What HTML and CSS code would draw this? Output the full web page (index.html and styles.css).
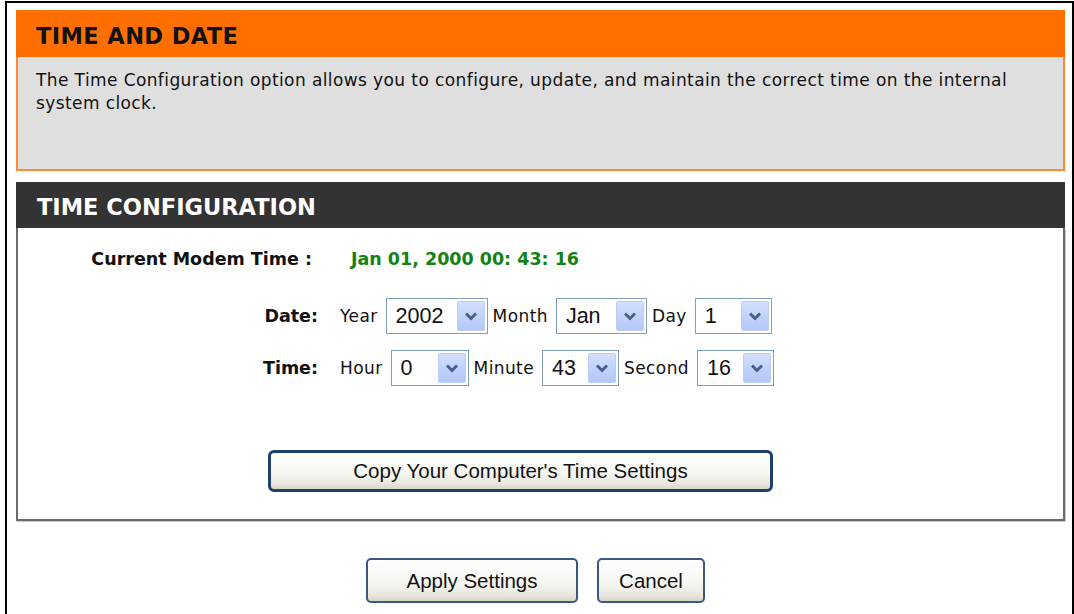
FILE: index.html
```html
<!DOCTYPE html>
<html lang="en">
<head>
<meta charset="utf-8">
<title>Time and Date</title>
<link rel="stylesheet" href="styles.css">
</head>
<body>
<div class="frame">
  <section class="panel panel-orange">
    <h2 class="panel-title">TIME AND DATE</h2>
    <div class="panel-body">
      <p class="intro">The Time Configuration option allows you to configure, update, and maintain the correct time on the internal system clock.</p>
    </div>
  </section>

  <section class="panel panel-dark">
    <h2 class="panel-title">TIME CONFIGURATION</h2>
    <div class="panel-body">
      <div class="form">
        <div class="row row-now">
          <span class="lbl lbl-now">Current Modem Time :</span>
          <span class="now">Jan 01, 2000 00: 43: 16</span>
        </div>
        <div class="row row-date">
          <span class="lbl">Date:</span>
          <div class="fields">
            <span class="fl">Year</span>
            <div class="sel w-year"><span class="val">2002</span><span class="arrow"><svg width="12" height="9" viewBox="0 0 12 9"><path d="M1 1.5 L6 6.5 L11 1.5" fill="none" stroke="#4a5f88" stroke-width="3"/></svg></span></div>
            <span class="fl">Month</span>
            <div class="sel w-mon"><span class="val">Jan</span><span class="arrow"><svg width="12" height="9" viewBox="0 0 12 9"><path d="M1 1.5 L6 6.5 L11 1.5" fill="none" stroke="#4a5f88" stroke-width="3"/></svg></span></div>
            <span class="fl">Day</span>
            <div class="sel w-sm"><span class="val">1</span><span class="arrow"><svg width="12" height="9" viewBox="0 0 12 9"><path d="M1 1.5 L6 6.5 L11 1.5" fill="none" stroke="#4a5f88" stroke-width="3"/></svg></span></div>
          </div>
        </div>
        <div class="row row-time">
          <span class="lbl">Time:</span>
          <div class="fields">
            <span class="fl">Hour</span>
            <div class="sel w-hour"><span class="val">0</span><span class="arrow"><svg width="12" height="9" viewBox="0 0 12 9"><path d="M1 1.5 L6 6.5 L11 1.5" fill="none" stroke="#4a5f88" stroke-width="3"/></svg></span></div>
            <span class="fl">Minute</span>
            <div class="sel w-sm"><span class="val">43</span><span class="arrow"><svg width="12" height="9" viewBox="0 0 12 9"><path d="M1 1.5 L6 6.5 L11 1.5" fill="none" stroke="#4a5f88" stroke-width="3"/></svg></span></div>
            <span class="fl">Second</span>
            <div class="sel w-sm"><span class="val">16</span><span class="arrow"><svg width="12" height="9" viewBox="0 0 12 9"><path d="M1 1.5 L6 6.5 L11 1.5" fill="none" stroke="#4a5f88" stroke-width="3"/></svg></span></div>
          </div>
        </div>
      </div>
      <div class="copy-row">
        <button class="btn btn-copy" type="button">Copy Your Computer's Time Settings</button>
      </div>
    </div>
  </section>

  <div class="actions">
    <button class="btn btn-apply" type="button">Apply Settings</button>
    <button class="btn btn-cancel" type="button">Cancel</button>
  </div>
</div>
</body>
</html>
```

FILE: styles.css
```css
* { box-sizing: border-box; }

html, body {
  margin: 0;
  padding: 0;
  background: #fff;
}

body {
  font-family: "DejaVu Sans", Verdana, sans-serif;
  font-size: 17px;
  color: #000;
}

.frame {
  margin: 1px 0 0 5px;
  border: 2px solid #000;
  border-bottom: none;
  min-height: calc(100vh - 1px);
  padding: 7px 7px 0 9px;
}

.panel-title {
  margin: 0;
  font-family: "DejaVu Sans", Verdana, sans-serif;
  font-weight: bold;
  font-size: 22.5px;
}

.panel-orange .panel-title {
  background: #ff6f00;
  color: #111;
  height: 47px;
  padding: 5px 0 0 20px;
  line-height: 42px;
  letter-spacing: 0.4px;
}

.panel-orange .panel-body {
  background: #dfdfdf;
  border: 2px solid #ff8a33;
  border-top: none;
  padding: 12px 18px 0 18px;
  height: 114px;
}

.intro {
  margin: 0;
  line-height: 23px;
  font-size: 17px;
  letter-spacing: 0.4px;
  color: #111;
}

.panel-dark {
  margin-top: 11px;
}

.panel-dark .panel-title {
  background: #333;
  color: #fff;
  height: 46px;
  padding: 5px 0 0 21px;
  line-height: 40px;
}

.panel-dark .panel-body {
  background: #fff;
  border: 2px solid #6b6b6b;
  border-top: none;
  box-shadow: 1px 1px 0 #c9c9c9;
  padding: 13px 0 27px 0;
}

.form {
  display: flex;
  flex-direction: column;
}

.row {
  display: grid;
  grid-template-columns: 300px auto;
  column-gap: 22px;
  align-items: center;
  height: 36px;
}

.row-date { margin-top: 21px; }
.row-time { margin-top: 16px; }

.lbl {
  text-align: right;
  font-weight: bold;
  font-size: 17.5px;
  color: #111;
}

.lbl-now { padding-right: 6px; }

.now {
  margin-left: 11px;
  font-weight: bold;
  font-size: 17.5px;
  color: #128212;
}

.fields {
  display: flex;
  align-items: center;
  gap: 6px;
}

.fl {
  font-size: 17px;
  letter-spacing: 0.4px;
  color: #111;
}

.fl + .sel { margin-left: 2px; }
.sel + .fl { margin-left: -1px; }

.sel {
  display: flex;
  align-items: center;
  justify-content: space-between;
  height: 36px;
  border: 1px solid #7f9db9;
  background: #fff;
  padding: 0 2px 0 9px;
  font-family: "Liberation Sans", Arial, sans-serif;
  font-size: 21.5px;
  color: #111;
}

.w-year { width: 102px; }
.w-mon { width: 91px; }
.w-sm { width: 77px; }
.w-hour { width: 78px; }

.arrow {
  display: flex;
  align-items: center;
  justify-content: center;
  width: 28px;
  height: 30px;
  border: 1px solid #bccdf5;
  border-radius: 2px;
  background: linear-gradient(#d3e0fd, #bed0fa 60%, #b4c8f6);
}

.copy-row {
  display: flex;
  padding-left: 250px;
  margin-top: 64px;
}

.btn {
  font-family: "Liberation Sans", Arial, sans-serif;
  font-size: 20.5px;
  color: #111;
  background: linear-gradient(#ffffff, #f6f6f2 55%, #e9e7df 85%, #d9d5c8);
  border: 2px solid #3a5785;
  border-radius: 5px;
  padding: 0;
  cursor: pointer;
}

.btn-copy {
  width: 505px;
  height: 42px;
  border: 3px solid #1f3f6e;
  border-radius: 6px;
}

.actions {
  display: flex;
  justify-content: center;
  gap: 19px;
  margin-top: 37px;
  padding-right: 10px;
}

.btn-apply { width: 212px; height: 45px; }
.btn-cancel { width: 108px; height: 45px; }
```
